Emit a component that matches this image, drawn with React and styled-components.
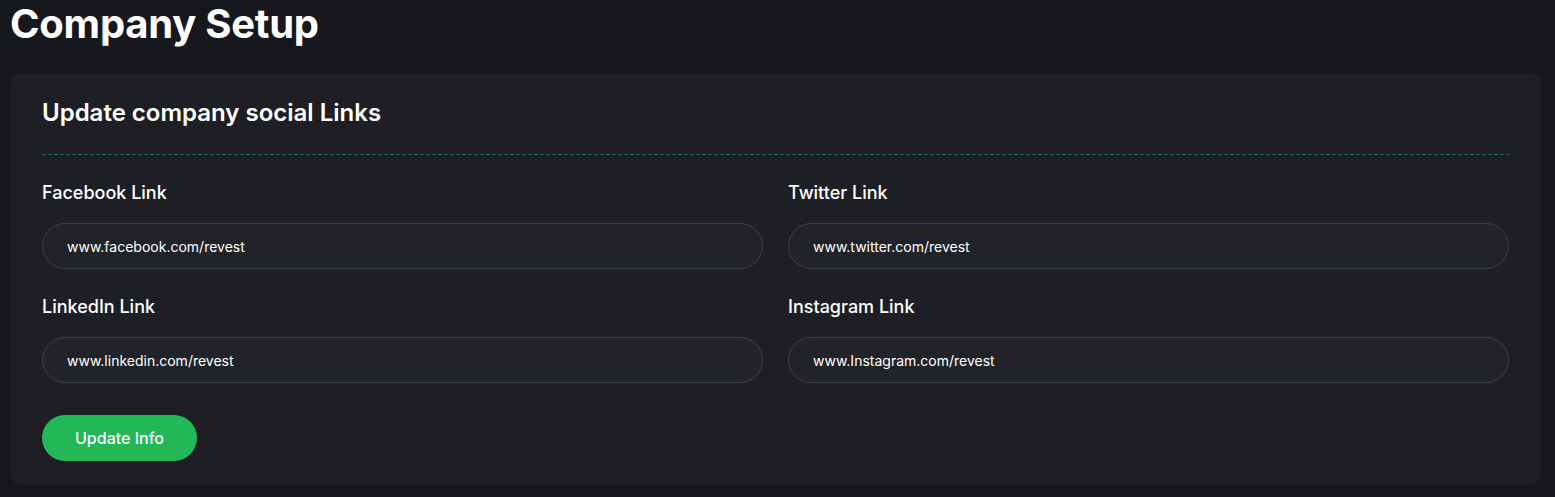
import styled, { createGlobalStyle } from 'styled-components';

const GlobalStyle = createGlobalStyle`
  body {
    margin: 0;
    background: #17181d;
    font-family: Inter, 'Noto Sans', sans-serif;
    color: #ffffff;
  }
`;

const Page = styled.div`
  padding: 0 14px 12px 10px;
`;

const PageTitle = styled.h1`
  margin: 0 0 25px;
  font-size: 40px;
  font-weight: 700;
  line-height: 48px;
  letter-spacing: -0.25px;
  color: #ffffff;
`;

const Card = styled.section`
  background: #1e1f24;
  border-radius: 12px;
  padding: 25px 32px 24px;
`;

const CardTitle = styled.h2`
  margin: 0;
  font-size: 24px;
  font-weight: 600;
  line-height: 30px;
  color: #ffffff;
`;

const Divider = styled.div`
  height: 1px;
  margin: 26px 0 26px;
  background: repeating-linear-gradient(
    to right,
    #1f6a40 0 4px,
    transparent 4px 6px
  );
`;

const FieldGrid = styled.div`
  display: grid;
  grid-template-columns: 1fr 1fr;
  column-gap: 25px;
  row-gap: 26px;
`;

const Field = styled.label`
  display: flex;
  flex-direction: column;
  gap: 18px;
`;

const Label = styled.span`
  font-size: 18px;
  font-weight: 500;
  line-height: 24px;
  color: #ffffff;
`;

const Input = styled.input`
  height: 46px;
  box-sizing: border-box;
  border: 1px solid #3a3f4d;
  border-radius: 23px;
  background: #212329;
  padding: 0 24px;
  font-family: Inter, 'Noto Sans', sans-serif;
  font-size: 14px;
  font-weight: 400;
  color: #ffffff;
  outline: none;
`;

const SubmitButton = styled.button`
  margin-top: 32px;
  height: 46px;
  padding: 0 33px;
  border: none;
  border-radius: 23px;
  background: #22b857;
  color: #ffffff;
  font-family: Inter, 'Noto Sans', sans-serif;
  font-size: 16px;
  font-weight: 500;
  cursor: pointer;
`;

const links = [
  { label: 'Facebook Link', value: 'www.facebook.com/revest' },
  { label: 'Twitter Link', value: 'www.twitter.com/revest' },
  { label: 'LinkedIn Link', value: 'www.linkedin.com/revest' },
  { label: 'Instagram Link', value: 'www.Instagram.com/revest' },
];

const App = () => {
  return (
    <Page>
      <GlobalStyle />
      <PageTitle>Company Setup</PageTitle>
      <Card>
        <CardTitle>Update company social Links</CardTitle>
        <Divider />
        <FieldGrid>
          {links.map(link => (
            <Field key={link.label}>
              <Label>{link.label}</Label>
              <Input defaultValue={link.value} />
            </Field>
          ))}
        </FieldGrid>
        <SubmitButton>Update Info</SubmitButton>
      </Card>
    </Page>
  );
};

export default App;
